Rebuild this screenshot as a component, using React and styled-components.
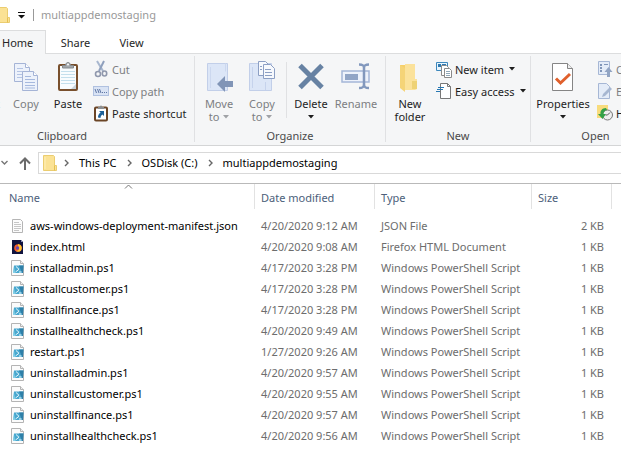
import React from "react";
import styled, { createGlobalStyle } from "styled-components";

const Global = createGlobalStyle`
  *, *::before, *::after { box-sizing: border-box; }
  body { margin: 0; background: #fff; overflow: hidden; }
  body, button, input { font-family: "Noto Sans", "Open Sans", sans-serif; font-size: 11px; }
`;

const Window = styled.main`
  color: #000;
  line-height: 16px;
  overflow: hidden;
`;

const TitleBar = styled.header`
  display: flex;
  align-items: center;
  height: 30px;
  color: #999;
`;

const Title = styled.h1`
  margin: 0;
  padding-left: 7px;
  font-size: 11px;
  font-weight: 400;
`;

const QuickButton = styled.button`
  display: flex;
  align-items: center;
  margin: 0 8px;
  padding: 0;
  border: 0;
  background: none;
`;

const TitleDivider = styled.span`
  width: 1px;
  height: 12px;
  background: #999;
`;

const Tabs = styled.nav`
  display: flex;
  height: 24px;
  border-bottom: 1px solid #dcddde;
`;

const Tab = styled.button`
  height: 24px;
  padding: 0 13px;
  border: 0;
  border-top: 1px solid ${(p) => (p.$active ? "#dcddde" : "transparent")};
  border-right: 1px solid ${(p) => (p.$active ? "#dcddde" : "transparent")};
  background: ${(p) => (p.$active ? "#f5f6f7" : "transparent")};
  color: #262626;
  width: ${(p) => p.$width}px;
  ${(p) => p.$active && "padding-left: 2px; text-align: left;"}
`;

const Ribbon = styled.section`
  display: flex;
  height: 92px;
  padding: 2px 0 3px;
  background: #f5f6f7;
  border-bottom: 1px solid #d4d5d6;
  overflow: hidden;
`;

const Group = styled.div`
  display: flex;
  flex-direction: column;
  flex: none;
  width: ${(p) => p.$width}px;
  margin-left: ${(p) => (p.$clipped ? "-70px" : "0")};
  border-right: 1px solid #e0e1e3;
`;

const Tools = styled.div`
  display: flex;
  flex: 1;
  padding-left: ${(p) => p.$inset}px;
`;

const Caption = styled.div`
  height: 12px;
  line-height: 12px;
  text-align: center;
  color: #4a4a4a;
`;

const LargeButton = styled.button`
  display: flex;
  flex-direction: column;
  align-items: center;
  flex: none;
  width: ${(p) => p.$width}px;
  padding: 4px 0 0;
  border: 0;
  background: none;
  line-height: 13px;
  white-space: nowrap;
  color: ${(p) => (p.$off ? "#7c7e82" : "#1e1e1e")};
`;

const LargeIcon = styled.span`
  display: block;
  height: 37px;
`;

const Arrowed = styled.span`
  display: flex;
  align-items: center;
  gap: 4px;
  min-height: 13px;
`;

const ToolDivider = styled.span`
  width: 1px;
  height: 56px;
  margin: 6px 2px 0;
  background: #e0e1e3;
`;

const Stack = styled.div`
  display: flex;
  flex-direction: column;
  padding: 2px 0 0 4px;
`;

const SmallButton = styled.button`
  display: flex;
  align-items: center;
  gap: 3px;
  height: 22px;
  padding: 0;
  border: 0;
  background: none;
  white-space: nowrap;
  color: ${(p) => (p.$off ? "#7c7e82" : "#1e1e1e")};
  svg:last-child { margin-left: 2px; }
`;

const AddressRow = styled.div`
  display: flex;
  align-items: center;
  height: 37px;
  padding-bottom: 3px;
  margin-right: -2px;
`;

const NavButton = styled.button`
  display: flex;
  flex: none;
  padding: 0;
  margin-right: ${(p) => p.$gap}px;
  border: 0;
  background: none;
`;

const AddressBox = styled.nav`
  display: flex;
  align-items: center;
  flex: 1;
  height: 22px;
  padding-left: 4px;
  border: 1px solid #d9d9d9;
`;

const Crumb = styled.a`
  margin-right: 10px;
  color: #000;
  text-decoration: none;
`;

const Chevron = styled.svg`
  margin-right: 10px;
`;

const ListArea = styled.section`
  display: grid;
  border-top: 1px solid #b9b9b9;
`;

const SortMark = styled.svg`
  grid-area: 1 / 1;
  margin-left: 124px;
`;

const FileTable = styled.table`
  grid-area: 1 / 1;
  width: 100%;
  table-layout: fixed;
  border-collapse: separate;
  border-spacing: 0;
  white-space: nowrap;
  thead::after { content: ""; display: block; height: 6px; }
`;

const Head = styled.th`
  height: 25px;
  padding: 2px 0 0 ${(p) => p.$inset}px;
  border-right: ${(p) => (p.$last ? "0" : "1px solid #e2e2e2")};
  color: #4c607a;
  font-weight: 400;
  text-align: left;
`;

const Cell = styled.td`
  height: 21px;
  padding: 0 ${(p) => (p.$right ? 8 : 0)}px 0 6px;
  color: #6d6d6d;
  text-align: ${(p) => (p.$right ? "right" : "left")};
`;

const NameCell = styled(Cell)`
  padding-left: 10px;
  color: #000;
`;

const FileName = styled.span`
  display: flex;
  align-items: center;
  gap: 4px;
`;

const Caret = ({ color = "#1e1e1e" }) => (
  <svg width="6" height="4" viewBox="0 0 6 4"><path d="M0 0h6L3 3.5z" fill={color} /></svg>
);

const Pages = ({ x = 0, y = 0 }) => (
  <g transform={`translate(${x} ${y})`} stroke="#a5b4d6" fill="#edf2fb">
    <path d="M.5.5h11l4 4v14H.5z" />
    <path d="M11.5.5v4h4" fill="#fff" />
    <path d="M3 5.5h6M3 8.500h10M3 11.500h10M3 14.500h10" stroke="#b4c4e4" />
    <g transform="translate(8 8)">
      <path d="M.5.5h11l4 4v15H.5z" />
      <path d="M11.5.5v4h4" fill="#fff" />
      <path d="M3 5.500h6M3 8.500h10M3 11.500h10M3 14.500h10M3 17h10" stroke="#a6b9de" />
    </g>
  </g>
);

const CopyIcon = () => (
  <svg width="24" height="31" viewBox="0 0 24 31"><Pages y={3} /></svg>
);

const PasteIcon = () => (
  <svg width="22" height="32" viewBox="0 0 22 32">
    <rect x="2" y="5" width="18" height="25" rx="1" fill="#f8fcfe" stroke="#79502d" strokeWidth="2" />
    <path d="M4 11.500h14M4 14.500h14M4 17.500h14M4 20.500h14M4 23.500h14" stroke="#c4dfec" />
    <path d="M14 29l5-5v5z" fill="#c9d4dc" />
    <path d="M5.500 8V5.500h3c0-4 5-4 5 0h3V8z" fill="#a4a9ad" stroke="#858a8e" />
    <circle cx="11" cy="4.500" r="1" fill="#fff" />
  </svg>
);

const CutIcon = () => (
  <svg width="16" height="18" viewBox="0 0 16 18" fill="none">
    <path d="M4 1l6 10" stroke="#a8b7cf" strokeWidth="2" />
    <path d="M11 1L6 11" stroke="#8fa0bd" strokeWidth="2" />
    <ellipse cx="5" cy="14" rx="2.500" ry="2.500" stroke="#9098ad" strokeWidth="1.600" />
    <ellipse cx="11.500" cy="13.500" rx="2.200" ry="2.500" stroke="#9098ad" strokeWidth="1.600" />
  </svg>
);

const PathIcon = () => (
  <svg width="16" height="10" viewBox="0 0 16 10">
    <rect x=".5" y=".5" width="15" height="9" fill="#d9e3f4" stroke="#b0c1e0" />
    <path d="M2 3l1.500 4M4.500 3l1.500 4M6.500 3l1.500 4" stroke="#5f77a5" fill="none" />
    <path d="M9 6.500h1M11 6.500h1M13 6.500h1" stroke="#5f77a5" />
  </svg>
);

const ShortcutIcon = () => (
  <svg width="16" height="17" viewBox="0 0 16 17">
    <rect x="2" y="2.500" width="12" height="13" rx="1" fill="#fff" stroke="#6b4526" strokeWidth="2" />
    <path d="M5 4V2h2c0-2 2-2 2 0h2v2z" fill="#8a8e92" />
    <path d="M6 6h5v5L9.400 9.400C8 10.500 7.500 11.500 7.500 13L5 12.500c0-2 .7-3.500 2.600-4.900z" fill="#1d6098" />
  </svg>
);

const MoveIcon = () => (
  <svg width="32" height="32" viewBox="0 0 32 32">
    <path d="M4.500 3.500h20v27h-20z" fill="#dce6f7" stroke="#c2cfe9" />
    <path d="M22.500 3.500v8M7.500 28V7" stroke="#ccd8ef" />
    <path d="M14 24l8-8v5h8v6h-8v5z" fill="#8195b7" />
  </svg>
);

const CopyToIcon = () => (
  <svg width="30" height="32" viewBox="0 0 30 32">
    <path d="M2.500 3.500h22v27h-22z" fill="#dce6f7" stroke="#c2cfe9" />
    <path d="M5.500 28V7M18.500 30v-8" stroke="#c6d3ec" />
    <g stroke="#8c9fc4" fill="#f7f9fd">
      <path d="M11.500 1.500h7l3 3v11h-10z" />
      <path d="M16.500 4.500h7l4 4v10h-11z" />
      <path d="M18 9.500h6M18 12.500h7M18 15.500h7M13 6.500h2M13 9.500h2" />
    </g>
  </svg>
);

const DeleteIcon = () => (
  <svg width="28" height="31" viewBox="0 0 28 31">
    <path d="M3 5.500l22 22M25 5.500l-22 22" stroke="#6782a3" strokeWidth="5" />
  </svg>
);

const RenameIcon = () => (
  <svg width="30" height="31" viewBox="0 0 30 31" fill="none">
    <rect x="1" y="11" width="27" height="11" fill="#edf2fb" stroke="#a4b6d8" strokeWidth="1.500" />
    <rect x="4" y="14" width="13" height="6" fill="#91a5c6" />
    <path d="M18 4.500c4 0 5 1 5 3.500v16c0 3-1 4-5 4M28 4.500c-4 0-5 1-5 3.500v16c0 3 1 4 5 4" stroke="#8298bd" strokeWidth="2.500" />
  </svg>
);

const NewFolderIcon = () => (
  <svg width="22" height="33" viewBox="0 0 22 33">
    <path d="M1 5h11v25l-11-4z" fill="#f6cf67" />
    <path d="M6 4h10v15h2v10l-2 1H6z" fill="#fbe29b" />
    <path d="M1 5l5 3v24l-5-4z" fill="#f5d478" />
    <path d="M13 21h5v8h-5z" fill="#eed276" />
  </svg>
);

const NewItemIcon = () => (
  <svg width="16" height="17" viewBox="0 0 16 17">
    <path d="M.5 1.500h11v8H.5z" fill="#e8f5fd" stroke="#3d88bd" />
    <path d="M2 3h3v3H2zM6 3h4v2H6z" fill="#2e79b1" />
    <path d="M5.500 4.500h5l2 2v8h-7z" fill="#fff" stroke="#8a8a8a" />
    <path d="M8.500 7.500h5l2 2v7h-7z" fill="#fff" stroke="#8a8a8a" />
    <path d="M10 10.500h4M10 12.500h4M10 14.500h4" stroke="#8fa7b8" />
  </svg>
);

const EasyIcon = () => (
  <svg width="16" height="16" viewBox="0 0 16 16">
    <path d="M4.500.5h7l3 3v12h-10z" fill="#fff" stroke="#777" />
    <path d="M11.500.5v3h3" fill="none" stroke="#777" />
    <path d="M2 4.500h6M1 6.500h6M0 8.500h4" stroke="#2878b3" />
  </svg>
);

const PropertiesIcon = () => (
  <svg width="22" height="33" viewBox="0 0 22 33">
    <path d="M.5 3.500h15l5 5v22H.5z" fill="#fff" stroke="#858585" />
    <path d="M15.500 3.500v5h5" fill="#eee" stroke="#858585" />
    <path d="M4 18.500l4.500 4.500L18 14" fill="none" stroke="#e0602c" strokeWidth="3" />
  </svg>
);

const OpenIcon = () => (
  <svg width="16" height="16" viewBox="0 0 16 16">
    <path d="M1.500.5h11v13h-11z" fill="#e4ecf8" stroke="#a6b7d5" />
    <path d="M3 3h2v2H3zM3 6h2v2H3zM3 9h2v2H3zM7 3h4v1H7z" fill="#8196b9" />
    <path d="M10 16v-5H7.500l4-5 4 5H13v5z" fill="#91a4c3" />
  </svg>
);

const EditIcon = () => (
  <svg width="16" height="16" viewBox="0 0 16 16">
    <path d="M1.500.5h8l3 3v12h-11z" fill="#e4ecf8" stroke="#a6b7d5" />
    <path d="M5 14l1-3 7-7 2 2-7 7z" fill="#a7b7d1" />
  </svg>
);

const HistoryIcon = () => (
  <svg width="16" height="16" viewBox="0 0 16 16">
    <path d="M0 0h11v13H0z" fill="#f8dc7d" />
    <circle cx="10.500" cy="10" r="5" fill="#eee" stroke="#777" />
    <path d="M10.500 10l2.500-2.500M10.500 10h-2" stroke="#555" />
    <path d="M9 3C5 3 3 6 3.500 9H1l4.500 5L9 9H6.500C6.500 7 7.500 5.500 10 5z" fill="#34a147" />
  </svg>
);

const FolderIcon = ({ width = 14 }) => (
  <svg width={width} height="17" viewBox={`${14 - width} 0 ${width} 17`}>
    <path d="M.5.5h10l1 1v9h2v5H.5z" fill="#fbe294" stroke="#ebcd70" />
    <path d="M11.500 10.500v5" stroke="#e4bf51" fill="none" />
    <path d="M2 2v12" stroke="#fff0b8" />
  </svg>
);

const JsonIcon = () => (
  <svg width="16" height="16" viewBox="0 0 16 16">
    <path d="M2.500 1.500h8l2 2v11h-10z" fill="#fcfcfc" stroke="#b5b5b5" />
    <path d="M4 4.500h5M4 6.500h7M4 8.500h7M4 10.500h7M4 12.500h5" stroke="#c6c6c6" />
  </svg>
);

const FirefoxIcon = () => (
  <svg width="16" height="16" viewBox="0 0 16 16">
    <path d="M2 1h9l2 2v12H2z" fill="#10133f" />
    <path d="M11 1v2h2z" fill="#8d90ba" />
    <circle cx="8" cy="9" r="3.800" fill="#f15a2d" />
    <path d="M8 5c4 1 4.500 4 3 6.500C10 13 7 13 6 12c3 0 4-3 2-5z" fill="#ffc52f" />
    <circle cx="7.500" cy="9" r="1.700" fill="#6548b5" />
  </svg>
);

const ScriptIcon = () => (
  <svg width="16" height="16" viewBox="0 0 16 16">
    <path d="M1.500.5h9l3 3v12h-12z" fill="#fbfbfb" stroke="#b4b4b4" />
    <path d="M10.500.5v3h3" fill="#eee" stroke="#b4b4b4" />
    <path d="M4 5.500h9.500l-.5 7.500H3z" fill="#49a8cf" />
    <path d="M9 5.500h4.500l-.5 7.500h-1z" fill="#2e7fa8" />
    <path d="M6 6.500l3 2.800-3.500 2.700M9 12h2.500" stroke="#e8f7fc" fill="none" />
    <path d="M4 7l-1 6h2z" fill="#8bd5ea" />
  </svg>
);

const ps = (name, date) => ({ name, date, type: "Windows PowerShell Script", size: "1 KB", Icon: ScriptIcon });

const files = [
  { name: "aws-windows-deployment-manifest.json", date: "4/20/2020 9:12 AM", type: "JSON File", size: "2 KB", Icon: JsonIcon },
  { name: "index.html", date: "4/20/2020 9:08 AM", type: "Firefox HTML Document", size: "1 KB", Icon: FirefoxIcon },
  ps("installadmin.ps1", "4/17/2020 3:28 PM"),
  ps("installcustomer.ps1", "4/17/2020 3:28 PM"),
  ps("installfinance.ps1", "4/17/2020 3:28 PM"),
  ps("installhealthcheck.ps1", "4/20/2020 9:49 AM"),
  ps("restart.ps1", "1/27/2020 9:26 AM"),
  ps("uninstalladmin.ps1", "4/20/2020 9:57 AM"),
  ps("uninstallcustomer.ps1", "4/20/2020 9:55 AM"),
  ps("uninstallfinance.ps1", "4/20/2020 9:57 AM"),
  ps("uninstallhealthcheck.ps1", "4/20/2020 9:56 AM"),
];

const Large = ({ Icon, width, off, lines, arrow }) => (
  <LargeButton $width={width} $off={off}>
    <LargeIcon>{Icon && <Icon />}</LargeIcon>
    {lines.map((line, i) => (
      <Arrowed key={i}>
        {line}
        {arrow && i === lines.length - 1 && <Caret color={off ? "#a0a2a6" : undefined} />}
      </Arrowed>
    ))}
  </LargeButton>
);

const Small = ({ Icon, off, label, arrow }) => (
  <SmallButton $off={off}>
    <Icon />
    <span>{label}</span>
    {arrow && <Caret />}
  </SmallButton>
);

const Separator = () => (
  <Chevron width="5" height="8" viewBox="0 0 5 8" aria-hidden="true">
    <path d="M1 1l3 3-3 3" fill="none" stroke="#666" strokeWidth="1.400" />
  </Chevron>
);

export default function App() {
  return (
    <Window>
      <Global />
      <TitleBar>
        <FolderIcon width={10} />
        <QuickButton aria-label="Customize Quick Access Toolbar">
          <svg width="7" height="7" viewBox="0 0 7 7"><path d="M0 0h7v1H0zM0 3h7L3.500 6.500z" fill="#111" /></svg>
        </QuickButton>
        <TitleDivider aria-hidden="true" />
        <Title>multiappdemostaging</Title>
      </TitleBar>

      <Tabs>
        <Tab $active $width={46}>Home</Tab>
        <Tab $width={60}>Share</Tab>
        <Tab $width={52}>View</Tab>
      </Tabs>

      <Ribbon>
        <Group $width={265} $clipped>
          <Tools $inset={3}>
            <Large width={72} off lines={["Pin to Quick", "access"]} />
            <Large Icon={CopyIcon} width={42} off lines={["Copy"]} />
            <Large Icon={PasteIcon} width={42} lines={["Paste"]} />
            <Stack>
              <Small Icon={CutIcon} off label="Cut" />
              <Small Icon={PathIcon} off label="Copy path" />
              <Small Icon={ShortcutIcon} label="Paste shortcut" />
            </Stack>
          </Tools>
          <Caption>Clipboard</Caption>
        </Group>
        <Group $width={191}>
          <Tools $inset={3}>
            <Large Icon={MoveIcon} width={42} off arrow lines={["Move", "to"]} />
            <Large Icon={CopyToIcon} width={44} off arrow lines={["Copy", "to"]} />
            <ToolDivider />
            <Large Icon={DeleteIcon} width={44} arrow lines={["Delete", ""]} />
            <Large Icon={RenameIcon} width={46} off lines={["Rename"]} />
          </Tools>
          <Caption>Organize</Caption>
        </Group>
        <Group $width={145}>
          <Tools $inset={2}>
            <Large Icon={NewFolderIcon} width={44} lines={["New", "folder"]} />
            <Stack>
              <Small Icon={NewItemIcon} arrow label="New item" />
              <Small Icon={EasyIcon} arrow label="Easy access" />
            </Stack>
          </Tools>
          <Caption>New</Caption>
        </Group>
        <Group $width={130}>
          <Tools $inset={2}>
            <Large Icon={PropertiesIcon} width={60} arrow lines={["Properties", ""]} />
            <Stack>
              <Small Icon={OpenIcon} off label="Open" />
              <Small Icon={EditIcon} off label="Edit" />
              <Small Icon={HistoryIcon} label="History" />
            </Stack>
          </Tools>
          <Caption>Open</Caption>
        </Group>
      </Ribbon>

      <AddressRow>
        <NavButton $gap={11} aria-label="Recent locations">
          <svg width="8" height="6" viewBox="0 0 8 6"><path d="M1.500 1L4.500 4l3-3" fill="none" stroke="#777" strokeWidth="1.400" /></svg>
        </NavButton>
        <NavButton $gap={7} aria-label="Up">
          <svg width="12" height="13" viewBox="0 0 12 13"><path d="M6 13V1.500M1 6.500l5-5 5 5" fill="none" stroke="#6b6b6b" strokeWidth="2" /></svg>
        </NavButton>
        <AddressBox aria-label="Address">
          <NavButton $gap={7} aria-label="Folder"><FolderIcon /></NavButton>
          <Separator />
          <Crumb href="#pc">This PC</Crumb>
          <Separator />
          <Crumb href="#c">OSDisk (C:)</Crumb>
          <Separator />
          <Crumb href="#staging">multiappdemostaging</Crumb>
        </AddressBox>
      </AddressRow>

      <ListArea>
        <FileTable>
          <colgroup>
            <col width="255" />
            <col width="120" />
            <col width="157" />
            <col width="80" />
            <col />
          </colgroup>
          <thead>
            <tr>
              <Head scope="col" $inset={9}>Name</Head>
              <Head scope="col" $inset={6}>Date modified</Head>
              <Head scope="col" $inset={6}>Type</Head>
              <Head scope="col" $inset={6}>Size</Head>
              <Head as="td" $last $inset={0} />
            </tr>
          </thead>
          <tbody>
            {files.map(({ name, date, type, size, Icon }) => (
              <tr key={name}>
                <NameCell><FileName><Icon />{name}</FileName></NameCell>
                <Cell>{date}</Cell>
                <Cell>{type}</Cell>
                <Cell $right>{size}</Cell>
                <td />
              </tr>
            ))}
          </tbody>
        </FileTable>
        <SortMark width="9" height="6" viewBox="0 0 9 6" aria-hidden="true">
          <path d="M1 4.500L4.500 1 8 4.500" fill="none" stroke="#777" />
        </SortMark>
      </ListArea>
    </Window>
  );
}
